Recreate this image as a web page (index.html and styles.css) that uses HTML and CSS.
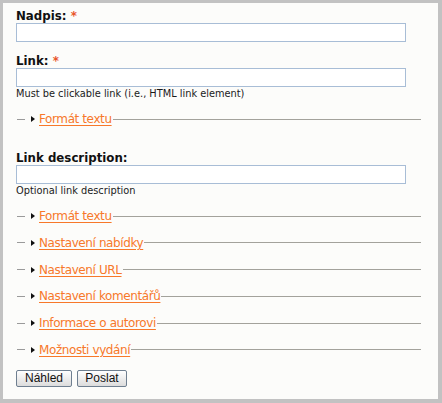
FILE: index.html
```html
<!DOCTYPE html>
<html lang="cs">
<head>
<meta charset="utf-8">
<title>Form</title>
<link rel="stylesheet" href="styles.css">
</head>
<body>
<div class="frame">
  <div class="field f1">
    <label class="lbl">Nadpis: <span class="req">*</span></label>
    <input class="txt" type="text">
  </div>
  <div class="field f2">
    <label class="lbl">Link: <span class="req">*</span></label>
    <input class="txt" type="text">
    <div class="desc">Must be clickable link (i.e., HTML link element)</div>
  </div>
  <div class="coll c-first"><span class="dash"></span><span class="tri"></span><a class="clink" href="#">Formát textu</a><span class="rule"></span></div>
  <div class="field f3">
    <label class="lbl">Link description:</label>
    <input class="txt" type="text">
    <div class="desc">Optional link description</div>
  </div>
  <div class="coll c-second"><span class="dash"></span><span class="tri"></span><a class="clink" href="#">Formát textu</a><span class="rule"></span></div>
  <div class="coll"><span class="dash"></span><span class="tri"></span><a class="clink" href="#">Nastavení nabídky</a><span class="rule"></span></div>
  <div class="coll"><span class="dash"></span><span class="tri"></span><a class="clink" href="#">Nastavení URL</a><span class="rule"></span></div>
  <div class="coll"><span class="dash"></span><span class="tri"></span><a class="clink" href="#">Nastavení komentářů</a><span class="rule"></span></div>
  <div class="coll"><span class="dash"></span><span class="tri"></span><a class="clink" href="#">Informace o autorovi</a><span class="rule"></span></div>
  <div class="coll"><span class="dash"></span><span class="tri"></span><a class="clink" href="#">Možnosti vydání</a><span class="rule"></span></div>
  <div class="buttons">
    <button class="btn b1" type="button">Náhled</button>
    <button class="btn b2" type="button">Poslat</button>
  </div>
</div>
</body>
</html>
```
FILE: styles.css
```css
html, body {
  margin: 0;
  padding: 0;
  background: #ffffff;
}
.frame {
  width: 442px;
  height: 403px;
  box-sizing: border-box;
  border-style: solid;
  border-color: #c2c2c2;
  border-width: 3px 4px 4px 3px;
  background: #fcfcfa;
  padding: 0 17px 0 13px;
  font-family: "DejaVu Sans", Verdana, sans-serif;
  color: #111;
  overflow: hidden;
}
.field { display: block; }
.f1 { padding-top: 7px; }
.f2 { margin-top: 13px; }
.f3 { margin-top: 26px; }
.lbl {
  display: block;
  font-weight: bold;
  font-size: 11.8px;
  line-height: 13px;
  height: 13px;
  color: #111;
}
.req {
  color: #e8552a;
  font-weight: bold;
}
.txt {
  display: block;
  width: 390px;
  height: 19px;
  box-sizing: border-box;
  margin: 0;
  padding: 0 2px;
  border: 1px solid #a8bdd6;
  background: #fff;
  font-size: 12px;
}
.desc {
  font-size: 9.8px;
  line-height: 12px;
  height: 12px;
  margin-top: 1px;
  color: #1a1a1a;
}
.coll {
  display: flex;
  align-items: center;
  height: 14px;
  margin-left: 1px;
  margin-top: 12.8px;
}
.c-first { margin-top: 12px; }
.c-second { margin-top: 12px; }
.dash {
  width: 8px;
  height: 0;
  border-top: 1px solid #9a9a9a;
  margin-right: 6px;
}
.tri {
  width: 0;
  height: 0;
  border-top: 3px solid transparent;
  border-bottom: 3px solid transparent;
  border-left: 4px solid #111;
  margin-right: 4px;
}
.clink {
  font-size: 12px;
  letter-spacing: -0.4px;
  line-height: 14px;
  color: #f7782a;
  text-decoration: underline;
  text-decoration-color: #f7782a;
  text-underline-offset: 2px;
  white-space: nowrap;
}
.rule {
  flex: 1;
  height: 0;
  border-top: 1px solid #a3a29b;
  margin-left: 1px;
}
.buttons {
  display: flex;
  gap: 5px;
  margin-top: 13px;
}
.btn {
  font-family: "Liberation Sans", Arial, sans-serif;
  font-size: 12px;
  height: 17px;
  line-height: 15px;
  padding: 0 4px;
  margin: 0;
  border: 1px solid #6f7f90;
  border-radius: 2px;
  background: linear-gradient(#ffffff, #dcdcdc);
  color: #111;
  box-sizing: border-box;
}
.b1 { width: 56px; }
.b2 { width: 50px; }
```
